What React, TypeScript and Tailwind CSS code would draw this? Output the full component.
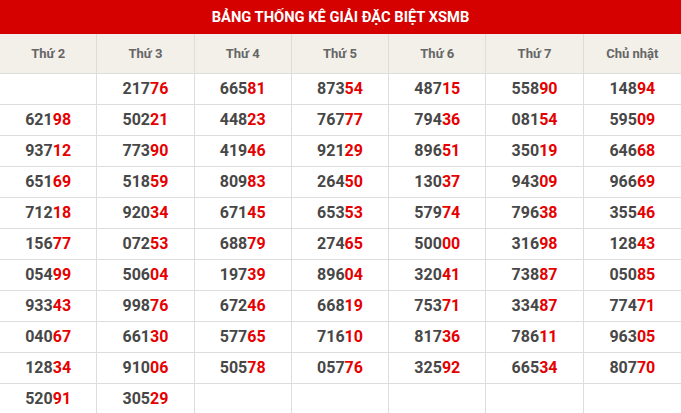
import React from 'react';

const days = ['Thứ 2', 'Thứ 3', 'Thứ 4', 'Thứ 5', 'Thứ 6', 'Thứ 7', 'Chủ nhật'];

const rows: string[][] = [
  ['', '21776', '66581', '87354', '48715', '55890', '14894'],
  ['62198', '50221', '44823', '76777', '79436', '08154', '59509'],
  ['93712', '77390', '41946', '92129', '89651', '35019', '64668'],
  ['65169', '51859', '80983', '26450', '13037', '94309', '96669'],
  ['71218', '92034', '67145', '65353', '57974', '79638', '35546'],
  ['15677', '07253', '68879', '27465', '50000', '31698', '12843'],
  ['05499', '50604', '19739', '89604', '32041', '73887', '05085'],
  ['93343', '99876', '67246', '66819', '75371', '33487', '77471'],
  ['04067', '66130', '57765', '71610', '81736', '78611', '96305'],
  ['12834', '91006', '50578', '05776', '32592', '66534', '80770'],
  ['52091', '30529', '', '', '', '', ''],
];

const Cell = ({ value, last }: { value: string; last: boolean }) => (
  <div
    className={`h-[31px] flex items-center justify-center border-b border-[#dddddd] ${
      last ? '' : 'border-r'
    }`}
  >
    {value && (
      <span className="text-[16px] font-bold leading-none">
        <span className="text-[#474747]">{value.slice(0, 3)}</span>
        <span className="text-[#e60000]">{value.slice(3)}</span>
      </span>
    )}
  </div>
);

const App = () => {
  return (
    <div className="w-[681px] h-[413px] overflow-hidden bg-white font-['Roboto',sans-serif]">
      <div className="h-[34px] bg-[#d50000] flex items-center justify-center">
        <h2 className="text-white text-[14.7px] font-bold">
          BẢNG THỐNG KÊ GIẢI ĐẶC BIỆT XSMB
        </h2>
      </div>

      <div className="grid grid-cols-7">
        {days.map((d, i) => (
          <div
            key={d}
            className={`h-[40px] flex items-center justify-center bg-[#f3f0ea] border-b border-[#dddddd] text-[13px] font-bold text-[#666666] ${
              i < 6 ? 'border-r' : ''
            }`}
          >
            {d}
          </div>
        ))}

        {rows.map((row, r) =>
          row.map((v, c) => <Cell key={`${r}-${c}`} value={v} last={c === 6} />)
        )}
      </div>
    </div>
  );
};

export default App;
